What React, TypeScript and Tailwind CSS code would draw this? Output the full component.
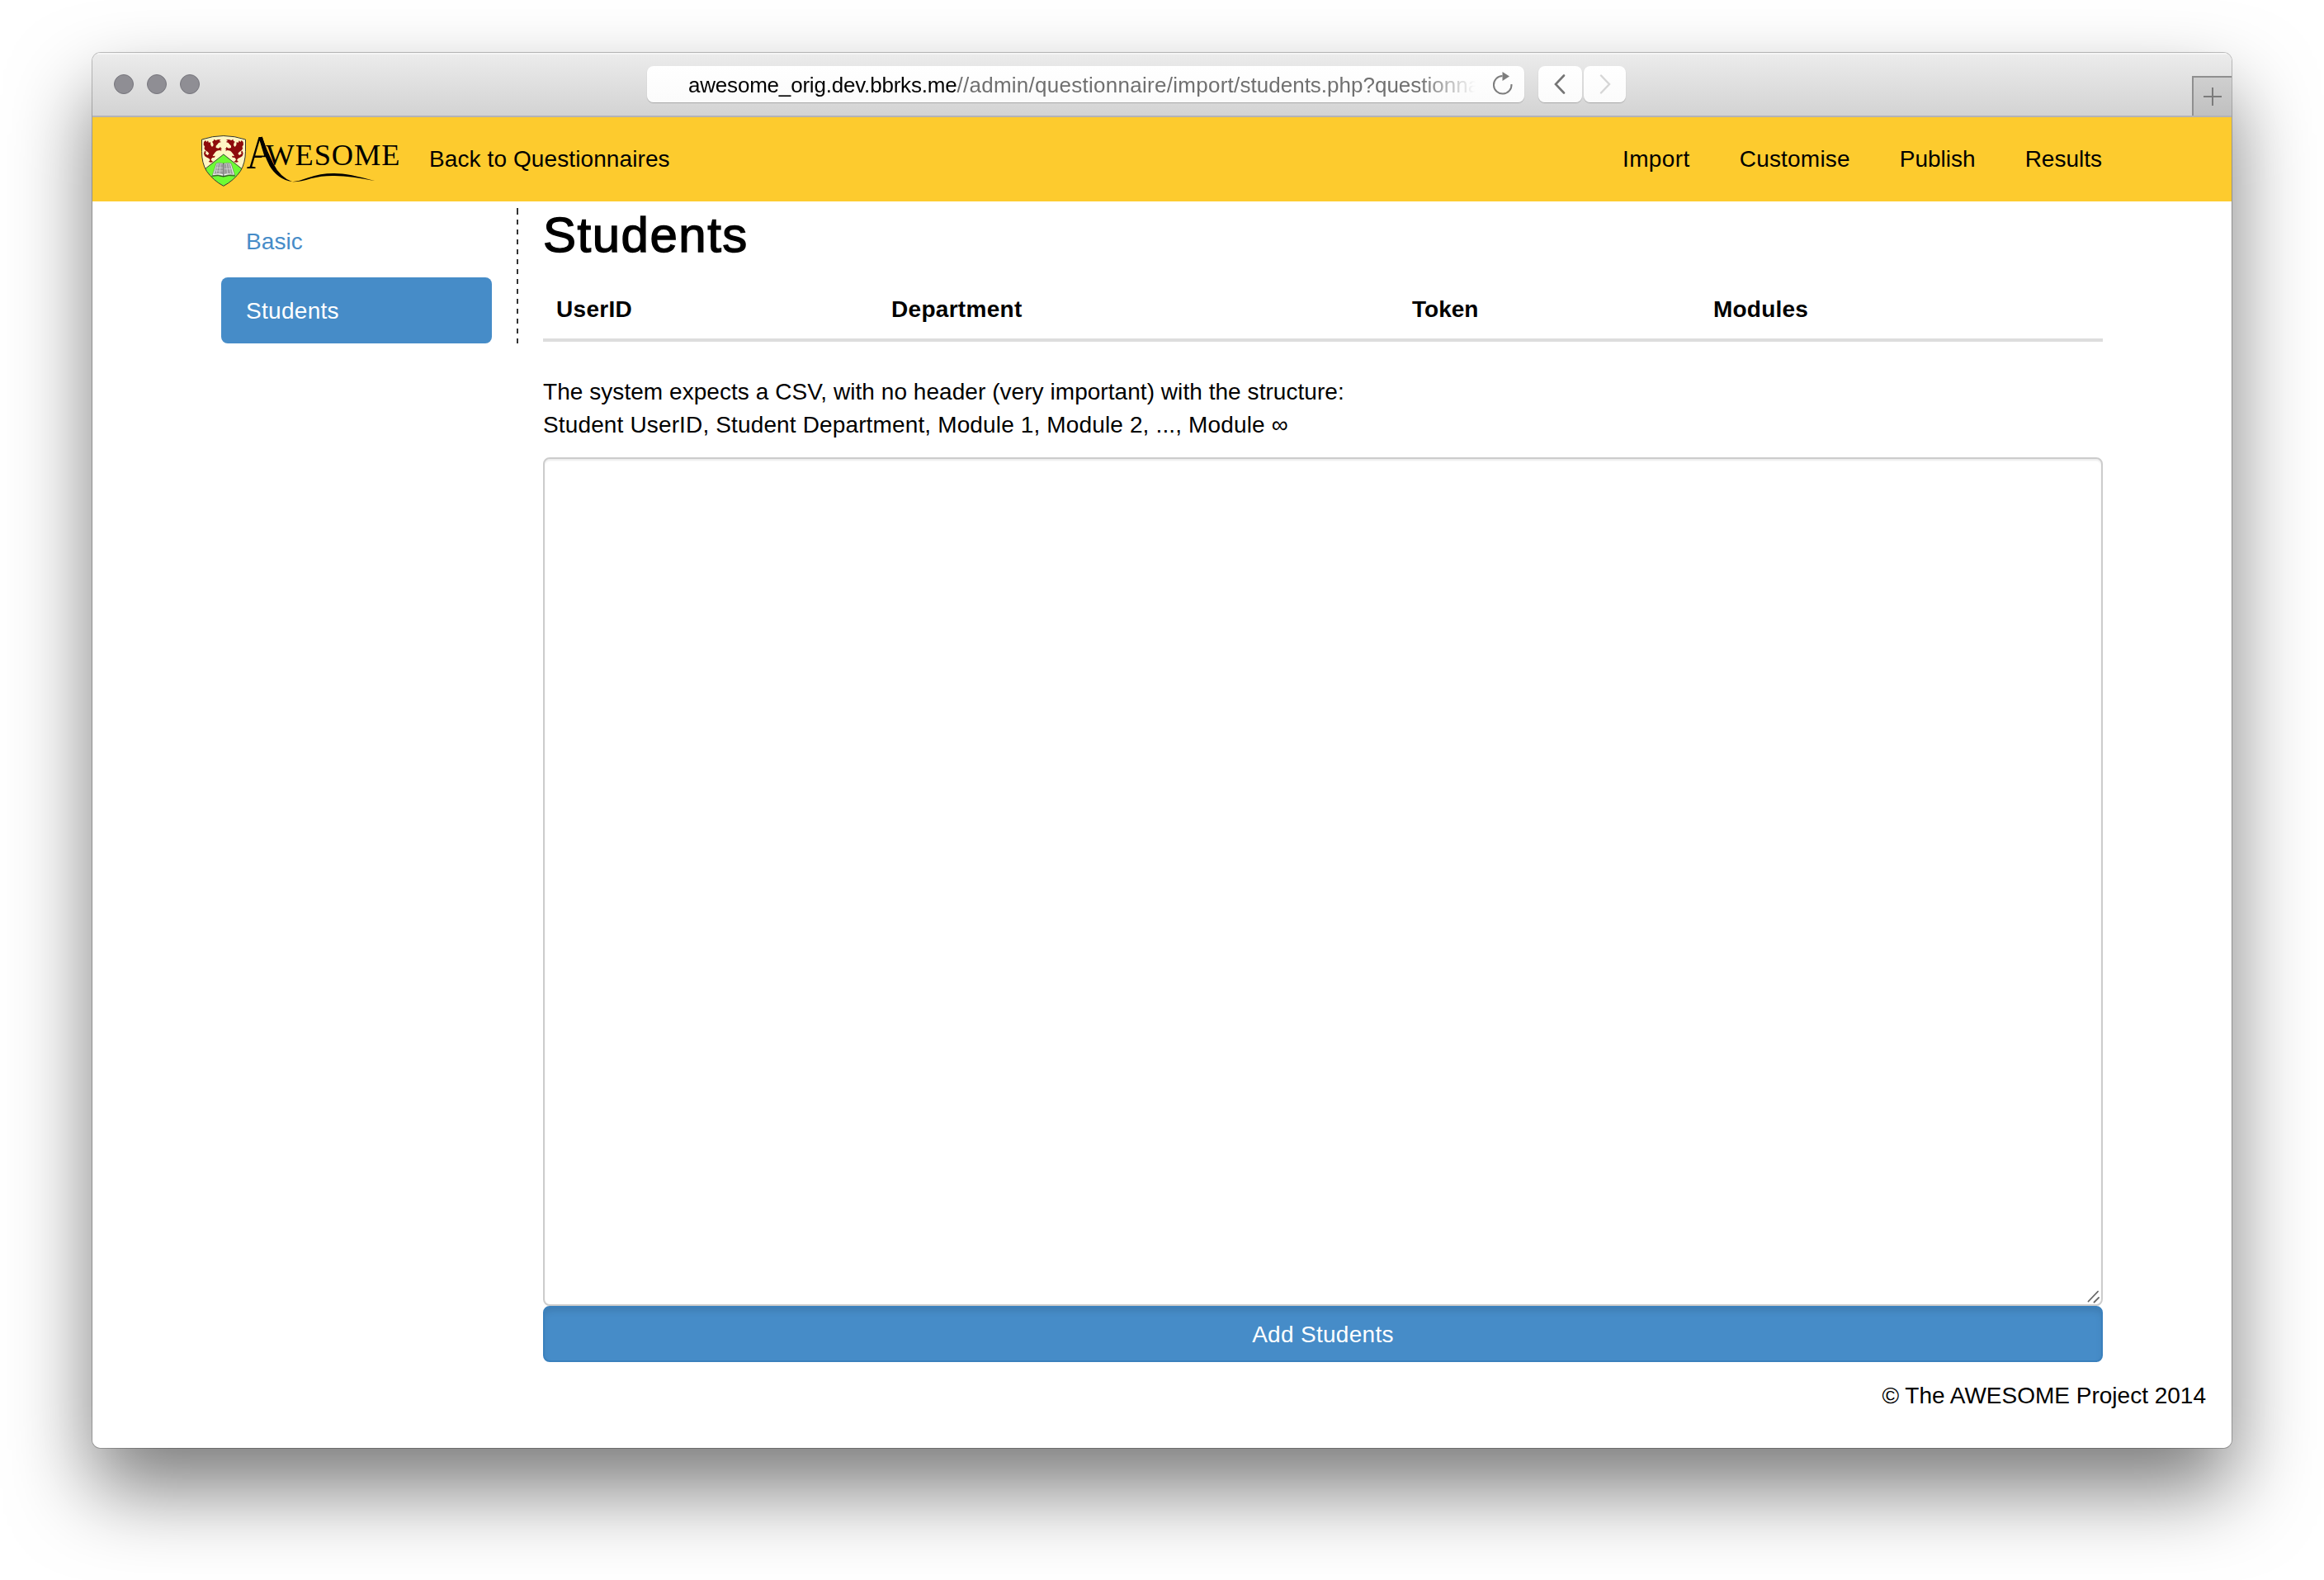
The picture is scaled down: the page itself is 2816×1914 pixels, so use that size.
function Dragon() {
  return (
    <path
      fill="#8e0b0c"
      d="M51 66 L57 60 L61 66 L66 61 L69 69 L75 66 L76 77 L81 84 L86 78 L84 68 L80 66 L86 62 L88 56 L94 60 L103 57 L113 58 L107 62 L114 66 L105 69 L100 75 L95 80 L95 87 L104 89 L112 84 L113 89 L118 90 L112 94 L116 99 L108 96 L98 98 L93 103 L86 112 L83 118 L92 116 L90 122 L82 123 L77 129 L80 135 L86 138 L76 140 L68 138 L74 132 L70 126 L62 122 L54 117 L51 108 L54 98 L59 101 L57 109 L65 114 L70 108 L65 102 L56 96 L52 88 L55 84 L50 76 Z"
    />
  );
}

const SHIELD =
  "M43.500 57 Q82 44 122.500 43.500 Q163 44 202.500 57 L202.500 100 Q202 142 184 172 Q160 206 122.500 226 Q85 206 61 172 Q43 142 43.500 100 Z";

function Logo() {
  return (
    <svg className="h-[70px] w-[245px] shrink-0" viewBox="33 30 735 210">
      <defs>
        <clipPath id="shield">
          <path d={SHIELD} />
        </clipPath>
      </defs>
      <g clipPath="url(#shield)">
        <rect x="40" y="40" width="166" height="190" fill="#fef6c4" />
        <Dragon />
        <g transform="translate(245 0) scale(-1 1)">
          <Dragon />
        </g>
        <path d="M122.500 111 L40 176 V240 H205 V176 Z" fill="#6dfb34" stroke="#222" strokeWidth="2.500" />
        <path d="M96 144 Q110 139 122 145 Q136 139 150 144 L163 186 Q140 182 122 190 Q104 182 82 188 Z" fill="#f4f4f4" stroke="#555" strokeWidth="1.500" />
        <path d="M98 146 Q110 142 120 147 L120 183 Q104 179 88 183 Z M125 147 Q137 142 147 146 L157 183 Q140 179 125 183 Z" fill="#9b9b9b" />
        <path d="M103 145 L96 181 M112 144 L108 180 M133 145 L137 180 M141 145 L149 181 M94 160 H120 M125 164 H152 M92 171 H120" stroke="#dcdcdc" strokeWidth="2" fill="none" />
        <path d="M122.500 143 V192 M80 190 Q104 185 122 192 Q140 185 165 189" stroke="#222" strokeWidth="2.500" fill="none" />
      </g>
      <path d={SHIELD} fill="none" stroke="#33362c" strokeWidth="3" />
      <text x="206" y="163" fontFamily="Liberation Serif" fontSize="172" textLength="104" lengthAdjust="spacingAndGlyphs">A</text>
      <path d="M262 121 L325 121 L325 168 L262 168 Z" fill="#fdcb2e" />
      <path d="M258 50 L262 46 Q280 98 303 143 Q328 194 372 210 Q320 203 290 153 Q270 114 256 62 Z" />
      <text x="277" y="150" fontFamily="Liberation Serif" fontSize="109" textLength="486">WESOME</text>
      <path d="M372 211 Q400 208 430 196 Q475 180 522 180 Q575 179 674 208 Q590 190 526 189 Q480 188 440 199 Q402 212 372 211 Z" />
    </svg>
  );
}

function TitleBar() {
  return (
    <div className="flex h-[78px] shrink-0 border-b-2 border-[#b3b2b6] bg-linear-to-b from-[#ececec] to-[#d3d3d3] shadow-[inset_0_2px_0_#f5f5f5]">
      <div className="mt-[26px] ml-[26px] flex w-[104px] gap-4">
        <span className="size-6 rounded-full border border-[#77767d] bg-[#8f8e94]" />
        <span className="size-6 rounded-full border border-[#77767d] bg-[#8f8e94]" />
        <span className="size-6 rounded-full border border-[#77767d] bg-[#8f8e94]" />
      </div>
      <div className="mt-4 ml-[542px] flex h-11 w-[1063px] items-center rounded-lg bg-linear-to-b from-white to-[#fbfbfb] pl-[50px] shadow-[0_1px_1px_#a8a8a8]">
        <div className="w-[956px] overflow-hidden pt-0.5 text-[26px] leading-[44px] whitespace-nowrap text-[#707070] [mask-image:linear-gradient(to_right,black_886px,transparent_954px)]">
          <span className="tracking-[-0.2px] text-black">awesome_orig.dev.bbrks.me</span>
          <span className="tracking-[0.27px]">//admin/questionnaire/import/</span>
          <span>students.php?questionna</span>
        </div>
        <svg className="ml-[17px] h-[30px] w-[28px]" viewBox="0 0 28 30" fill="none">
          <path d="M24.500 15 A10.800 10.800 0 1 1 13.500 5" stroke="#7d7d7d" strokeWidth="2" />
          <path d="M13.500 0 L22 5.500 L13.500 11 Z" fill="#7d7d7d" />
        </svg>
      </div>
      <div className="mt-4 ml-[17px] flex gap-0.5">
        <div className="flex h-11 w-[53px] items-center justify-center rounded-lg bg-linear-to-b from-white to-[#fbfbfb] pr-0.5 shadow-[0_1px_1px_#a8a8a8]">
          <svg className="h-6 w-4" viewBox="0 0 16 24" fill="none">
            <path d="M13 1.500 L3 12 L13 22.500" stroke="#757575" strokeWidth="2.600" strokeLinecap="round" />
          </svg>
        </div>
        <div className="flex h-11 w-[51px] items-center justify-center rounded-lg bg-linear-to-b from-white to-[#fbfbfb] shadow-[0_1px_1px_#a8a8a8]">
          <svg className="h-6 w-4" viewBox="0 0 16 24" fill="none">
            <path d="M3 1.500 L13 12 L3 22.500" stroke="#d6d6d6" strokeWidth="2.400" strokeLinecap="round" />
          </svg>
        </div>
      </div>
      <div className="mt-7 ml-auto flex h-[48px] w-12 items-center justify-center border-t-2 border-l-2 border-[#8f8f8f] bg-linear-to-b from-[#cfcfcf] to-[#c0c0c0]">
        <svg className="size-[22px]" viewBox="0 0 22 22">
          <path d="M11 0 V22 M0 11 H22" stroke="#7b7b7b" strokeWidth="2" />
        </svg>
      </div>
    </div>
  );
}

function NavBar() {
  return (
    <nav className="flex h-[102px] shrink-0 items-center bg-[#fdcb2e] pl-[129px] leading-10">
      <div className="flex h-full items-start pt-[18px]">
        <Logo />
      </div>
      <a className="ml-[34px] tracking-[0.1px]">Back to Questionnaires</a>
      <div className="mr-[157px] ml-auto flex gap-[60px]">
        <a className="tracking-[0.4px]">Import</a>
        <a className="tracking-[0.2px]">Customise</a>
        <a>Publish</a>
        <a>Results</a>
      </div>
    </nav>
  );
}

export default function App() {
  return (
    <div className="h-[1914px] w-[2816px] overflow-hidden bg-white pt-16 pl-28 font-['Liberation_Sans',Arial,sans-serif] text-[28px] text-black">
      <div className="h-[1690px] w-[2592px] rounded-[10px] shadow-[0_0_0_1px_rgba(0,0,0,0.24),0_50px_98px_rgba(0,0,0,0.52)]">
        <div className="flex h-full flex-col overflow-hidden rounded-[10px] bg-white">
          <TitleBar />
          <NavBar />
          <div className="flex items-start pt-2 pl-[156px]">
            <aside className="flex w-[328px] flex-col gap-1 leading-10">
              <a className="rounded-lg px-[30px] pt-[21px] pb-[19px] tracking-[0.1px] text-[#468cc8]">Basic</a>
              <a className="rounded-lg bg-[#468cc8] px-[30px] pt-[21px] pb-[19px] tracking-[0.3px] text-white">Students</a>
            </aside>
            <div className="mx-[30px] h-[164px] w-0.5 border-t-2 border-[#333] bg-[repeating-linear-gradient(to_bottom,#333_0px,#333_6px,transparent_6px,transparent_12px)]" />
            <main className="w-[1890px]">
              <h1 className="h-[86px] text-[60px] leading-[66px] tracking-[1.5px] [-webkit-text-stroke:1.4px_black]">Students</h1>
              <table className="w-full table-fixed border-b-4 border-[#dddddd] text-left leading-10">
                <thead>
                  <tr>
                    <th className="w-[406px] px-4 pt-[17px] pb-[15px] tracking-[0.3px]">UserID</th>
                    <th className="w-[631px] px-4 pt-[17px] pb-[15px] tracking-[0.3px]">Department</th>
                    <th className="w-[365px] px-4 pt-[17px] pb-[15px]">Token</th>
                    <th className="px-4 pt-[17px] pb-[15px] tracking-[0.2px]">Modules</th>
                  </tr>
                </thead>
              </table>
              <p className="mt-[41px] mb-[19px] leading-10">
                <span className="tracking-[0.05px]">The system expects a CSV, with no header (very important) with the structure:</span>
                <br />
                <span className="tracking-[0.14px]">Student UserID, Student Department, Module 1, Module 2, ..., Module ∞</span>
              </p>
              <div className="relative h-[1028px]">
                <textarea className="block h-full w-full resize-none rounded-lg border-2 border-[#cccccc] bg-white shadow-[inset_0_2px_2px_rgba(0,0,0,0.075)]" />
                <svg className="absolute right-[3px] bottom-[3px] size-4" viewBox="0 0 16 16">
                  <path d="M1.500 13.500 L13 1.500 M8.500 14.500 L14 9" stroke="#666" strokeWidth="1.800" strokeLinecap="round" />
                </svg>
              </div>
              <button className="block h-[68px] w-full rounded-lg border-2 border-[#3a80bd] bg-[#468cc8] pt-0.5 leading-10 tracking-[0.3px] text-white shadow-[inset_0_6px_10px_-3px_rgba(0,0,0,0.13)]">
                Add Students
              </button>
            </main>
          </div>
          <footer className="mt-[21px] pr-[31px] text-right leading-10">© The AWESOME Project 2014</footer>
        </div>
      </div>
    </div>
  );
}
